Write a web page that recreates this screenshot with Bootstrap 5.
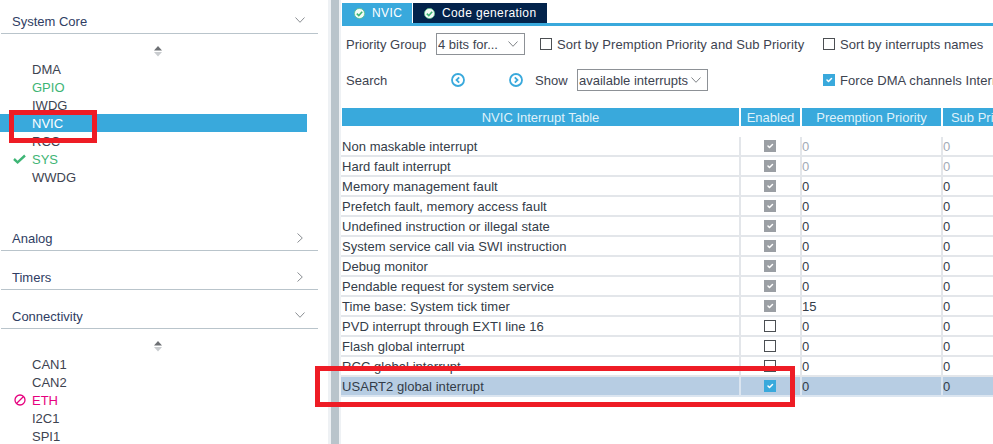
<!DOCTYPE html>
<html lang="en">
<head>
<meta charset="utf-8">
<title>NVIC</title>
<link href="https://cdn.jsdelivr.net/npm/bootstrap@5.3.0/dist/css/bootstrap.min.css" rel="stylesheet">
<style>
html,body{height:444px;overflow:hidden;background:#fff}
body{font-family:"Liberation Sans",Arial,sans-serif;font-size:13px;line-height:18px;color:#3d4350;position:relative}
.shell{width:993px;height:444px}
.side{width:328px;flex:none}
.splitter{width:13px;flex:none;background:#eef1f4;padding:0 2px 0 3px}
.splitter-bar{height:100%;background:#b9c4cb}
.pane{width:652px;flex:none;overflow:hidden}
.sec-head{height:22px;margin:0 10px 0 1px;padding:0 13px 2px 11px;border-bottom:1px solid #b9c4cb;color:#2f3d63;font-size:13px;line-height:20px}
.sec-first{margin-top:12px}
.sec-gap{margin-top:17px}
.sec-analog{margin-top:43px}
.chev-d{margin-bottom:3px}
.chev-r{margin:0 2px 2px 0}
.scroller{height:26px;padding-left:153px;padding-top:12px}
.scroller svg{display:block}
.periph{padding:0 21px 0 14px;height:18px;line-height:18px}
.periph-name{margin-left:4px;padding-top:1px}
.periph-mark{width:14px;flex:none}
.tick-i{margin-left:-1px}
.p-on{color:#3eb575}
.p-off{color:#e6007e}
.p-sel{background:#39a9dc;color:#fff;margin-right:21px;padding-right:0}
.tabs{padding-top:3px;margin-left:1px;border-bottom:3px solid #39a9dc}
.tab-a,.tab-b{height:20px;line-height:20px;font-size:12px;letter-spacing:.38px;color:#fff;gap:7px;white-space:nowrap;flex:none}
.tab-a{width:70px;background:#39a9dc;padding-left:12px;margin-right:1px}
.tab-b{width:134px;background:#03234b;padding-left:11px}
.ctl-row{padding-left:5px;height:22px}
.ctl-row>*{flex:none}
.ctl-one{margin-top:7px}
.ctl-two{margin-top:14px}
.ctl-sel{height:22px;border:1px solid #8d9196;border-radius:0;padding:1px 0 0 1px;font-size:13px;line-height:19px;color:#3d4350;background-image:url("data:image/svg+xml,%3csvg xmlns='http://www.w3.org/2000/svg' viewBox='0 0 10 6'%3e%3cpath fill='none' stroke='%23808488' d='M.5.5 5 5.300 9.500.5'/%3e%3c/svg%3e");background-position:right 6px center;background-size:10px 6px;box-shadow:none}
.sel-a{width:89px}
.sel-b{width:131px}
.lbl-a{width:90px;padding-top:1px}
.lbl-b{width:105px;padding-top:1px}
.lbl-s{width:42px;padding-top:1px}
.ck{width:12px;height:12px;margin:0;border:1px solid #4c4f53;border-radius:0!important;background-color:#fff;flex:none;opacity:1!important;background-size:10px}
.ck:checked{background-color:#39a9dc;border-color:#39a9dc}
.ck-g:checked{background-color:#9b9fa4;border-color:#9b9fa4}
.ck-label{margin-left:5px;padding-top:1px;white-space:nowrap;color:#3d4350;letter-spacing:.07px}
.ck-slot-a{width:283px;margin-left:15px}
.ck-slot-b{margin-left:115px}
.nav-arrows{width:58px}
.nav-arrows-b{width:26px}
.tbl{width:687px;margin:17px 0 0;table-layout:fixed;border-collapse:separate;border-spacing:0;--bs-table-bg:transparent;color:#333c48}
.col-name{width:400px}
.col-en{width:61px}
.col-pre{width:141px}
.col-sub{width:85px}
.tbl>thead>tr>th{height:29px;padding:2px 0 0;background:#39a9dc;background-clip:padding-box;border-bottom:11px solid #fff;border-right:2px solid #fff;color:#dff1fa;text-align:center;font-weight:400;line-height:16px;white-space:nowrap;overflow:hidden}
.tbl>thead>tr>th:first-child{border-left:1px solid #fff}
.tbl>tbody>tr>td{height:20px;padding:2px 0 0;line-height:16px;border-bottom:2px solid #e3e6ea;border-right:2px solid #e3e6ea;white-space:nowrap;vertical-align:top;letter-spacing:.05px}
.tbl>tbody>tr>td:first-child{padding-left:1px}
.tbl>tbody>tr>td.cc{padding:0 1px 0 0}
.tbl .ck{display:block;margin:3px auto 0}
.tbl>tbody>tr.row-sel>td{background:#b7cde3;border-bottom-color:#dbe5f0;border-right-color:#dbe5f0}
.tbl>tbody>tr>td.dim{color:#a3abb6}
.note{position:absolute;border:5px solid #ee1c25;pointer-events:none}
.note-a{left:9px;top:110px;width:88px;height:33px}
.note-b{left:315px;top:366px;width:480px;height:41px}
</style>
</head>
<body>
<div class="shell d-flex">
  <div class="side">
    <div class="sec-head sec-first d-flex justify-content-between align-items-center"><span>System Core</span>
      <svg class="chev-d" width="10" height="6" viewBox="0 0 10 6"><path d="M.5.5 5 5.300 9.500.5" fill="none" stroke="#8a8e92"/></svg></div>
    <div class="scroller"><svg width="10" height="11" viewBox="0 0 10 11"><path d="M5 0 9 4.500H1z" fill="#6d7074"/><path d="M1 6h8L5 10.500z" fill="#c9cccf"/></svg></div>
    <div class="periph d-flex"><span class="periph-mark"></span><span class="periph-name">DMA</span></div>
    <div class="periph p-on d-flex"><span class="periph-mark"></span><span class="periph-name">GPIO</span></div>
    <div class="periph d-flex"><span class="periph-mark"></span><span class="periph-name">IWDG</span></div>
    <div class="periph p-sel d-flex"><span class="periph-mark"></span><span class="periph-name">NVIC</span></div>
    <div class="periph d-flex"><span class="periph-mark"></span><span class="periph-name">RCC</span></div>
    <div class="periph p-on d-flex align-items-center"><span class="periph-mark"><svg class="d-block tick-i" width="13" height="10" viewBox="0 0 13 10"><path d="M1 5 4.600 8.300 12 1.500" fill="none" stroke="#3eb575" stroke-width="2.400"/></svg></span><span class="periph-name">SYS</span></div>
    <div class="periph d-flex"><span class="periph-mark"></span><span class="periph-name">WWDG</span></div>
    <div class="sec-head sec-analog d-flex justify-content-between align-items-center"><span>Analog</span>
      <svg class="chev-r" width="6" height="10" viewBox="0 0 6 10"><path d="M.5.500 5.300 5 .5 9.500" fill="none" stroke="#8a8e92"/></svg></div>
    <div class="sec-head sec-gap d-flex justify-content-between align-items-center"><span>Timers</span>
      <svg class="chev-r" width="6" height="10" viewBox="0 0 6 10"><path d="M.5.500 5.300 5 .5 9.500" fill="none" stroke="#8a8e92"/></svg></div>
    <div class="sec-head sec-gap d-flex justify-content-between align-items-center"><span>Connectivity</span>
      <svg class="chev-d" width="10" height="6" viewBox="0 0 10 6"><path d="M.5.5 5 5.300 9.500.5" fill="none" stroke="#8a8e92"/></svg></div>
    <div class="scroller"><svg width="10" height="11" viewBox="0 0 10 11"><path d="M5 0 9 4.500H1z" fill="#6d7074"/><path d="M1 6h8L5 10.500z" fill="#c9cccf"/></svg></div>
    <div class="periph d-flex"><span class="periph-mark"></span><span class="periph-name">CAN1</span></div>
    <div class="periph d-flex"><span class="periph-mark"></span><span class="periph-name">CAN2</span></div>
    <div class="periph p-off d-flex align-items-center"><span class="periph-mark"><svg class="d-block" width="12" height="12" viewBox="0 0 12 12"><circle cx="6" cy="6" r="5" fill="none" stroke="#e6007e" stroke-width="1.300"/><path d="M2.500 9.500 9.500 2.500" stroke="#e6007e" stroke-width="1.300"/></svg></span><span class="periph-name">ETH</span></div>
    <div class="periph d-flex"><span class="periph-mark"></span><span class="periph-name">I2C1</span></div>
    <div class="periph d-flex"><span class="periph-mark"></span><span class="periph-name">SPI1</span></div>
  </div>
  <div class="splitter"><div class="splitter-bar"></div></div>
  <div class="pane">
    <div class="tabs d-flex">
      <div class="tab-a d-flex align-items-center"><svg width="11" height="11" viewBox="0 0 11 11"><circle cx="5.500" cy="5.500" r="5.100" fill="#f3fbf6" stroke="#5cc08a" stroke-width=".8"/><path d="M2.800 5.600 4.800 7.600 8.200 3.800" fill="none" stroke="#3eb575" stroke-width="1.600"/></svg><span>NVIC</span></div>
      <div class="tab-b d-flex align-items-center"><svg width="11" height="11" viewBox="0 0 11 11"><circle cx="5.500" cy="5.500" r="5.100" fill="#f3fbf6" stroke="#5cc08a" stroke-width=".8"/><path d="M2.800 5.600 4.800 7.600 8.200 3.800" fill="none" stroke="#3eb575" stroke-width="1.600"/></svg><span>Code generation</span></div>
    </div>
    <div class="ctl-row ctl-one d-flex align-items-center">
      <span class="lbl-a">Priority Group</span>
      <select class="form-select ctl-sel sel-a"><option>4 bits for...</option></select>
      <div class="ck-slot-a d-flex align-items-center"><input class="form-check-input ck" type="checkbox"><span class="ck-label">Sort by Premption Priority and Sub Priority</span></div>
      <div class="d-flex align-items-center"><input class="form-check-input ck" type="checkbox"><span class="ck-label">Sort by interrupts names</span></div>
    </div>
    <div class="ctl-row ctl-two d-flex align-items-center">
      <span class="lbl-b">Search</span>
      <div class="nav-arrows d-flex"><svg width="14" height="14" viewBox="0 0 14 14"><circle cx="7" cy="7" r="6" fill="none" stroke="#39a9dc" stroke-width="1.800"/><path d="M8.200 4.300 5.500 7l2.700 2.700" fill="none" stroke="#39a9dc" stroke-width="1.800"/></svg></div>
      <div class="nav-arrows-b d-flex"><svg width="14" height="14" viewBox="0 0 14 14"><circle cx="7" cy="7" r="6" fill="none" stroke="#39a9dc" stroke-width="1.800"/><path d="M5.800 4.300 8.500 7l-2.700 2.700" fill="none" stroke="#39a9dc" stroke-width="1.800"/></svg></div>
      <span class="lbl-s">Show</span>
      <select class="form-select ctl-sel sel-b"><option>available interrupts</option></select>
      <div class="ck-slot-b d-flex align-items-center"><input class="form-check-input ck" type="checkbox" checked><span class="ck-label">Force DMA channels Interrupts</span></div>
    </div>
    <table class="table tbl">
      <colgroup><col class="col-name"><col class="col-en"><col class="col-pre"><col class="col-sub"></colgroup>
      <thead><tr><th>NVIC Interrupt Table</th><th>Enabled</th><th>Preemption Priority</th><th>Sub Priority</th></tr></thead>
      <tbody>
        <tr><td>Non maskable interrupt</td><td class="cc"><input class="form-check-input ck ck-g" type="checkbox" checked disabled></td><td class="dim">0</td><td class="dim">0</td></tr>
        <tr><td>Hard fault interrupt</td><td class="cc"><input class="form-check-input ck ck-g" type="checkbox" checked disabled></td><td class="dim">0</td><td class="dim">0</td></tr>
        <tr><td>Memory management fault</td><td class="cc"><input class="form-check-input ck ck-g" type="checkbox" checked disabled></td><td>0</td><td>0</td></tr>
        <tr><td>Prefetch fault, memory access fault</td><td class="cc"><input class="form-check-input ck ck-g" type="checkbox" checked disabled></td><td>0</td><td>0</td></tr>
        <tr><td>Undefined instruction or illegal state</td><td class="cc"><input class="form-check-input ck ck-g" type="checkbox" checked disabled></td><td>0</td><td>0</td></tr>
        <tr><td>System service call via SWI instruction</td><td class="cc"><input class="form-check-input ck ck-g" type="checkbox" checked disabled></td><td>0</td><td>0</td></tr>
        <tr><td>Debug monitor</td><td class="cc"><input class="form-check-input ck ck-g" type="checkbox" checked disabled></td><td>0</td><td>0</td></tr>
        <tr><td>Pendable request for system service</td><td class="cc"><input class="form-check-input ck ck-g" type="checkbox" checked disabled></td><td>0</td><td>0</td></tr>
        <tr><td>Time base: System tick timer</td><td class="cc"><input class="form-check-input ck ck-g" type="checkbox" checked disabled></td><td>15</td><td>0</td></tr>
        <tr><td>PVD interrupt through EXTI line 16</td><td class="cc"><input class="form-check-input ck" type="checkbox"></td><td>0</td><td>0</td></tr>
        <tr><td>Flash global interrupt</td><td class="cc"><input class="form-check-input ck" type="checkbox"></td><td>0</td><td>0</td></tr>
        <tr><td>RCC global interrupt</td><td class="cc"><input class="form-check-input ck" type="checkbox"></td><td>0</td><td>0</td></tr>
        <tr class="row-sel"><td>USART2 global interrupt</td><td class="cc"><input class="form-check-input ck" type="checkbox" checked></td><td>0</td><td>0</td></tr>
      </tbody>
    </table>
  </div>
</div>
<div class="note note-a"></div>
<div class="note note-b"></div>
<script src="https://cdn.jsdelivr.net/npm/bootstrap@5.3.0/dist/js/bootstrap.bundle.min.js"></script>
</body>
</html>
